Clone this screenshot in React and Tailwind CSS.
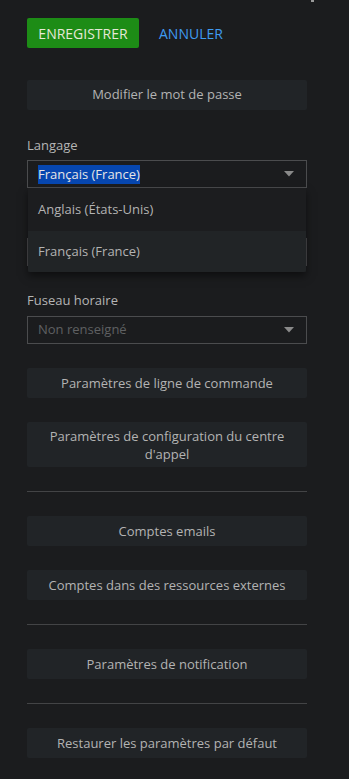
import React from "react";

const Arrow = ({ color = "#8a8a8a" }) => (
  <svg width="10" height="6" viewBox="0 0 10 6" className="absolute right-[12px] top-1/2 -translate-y-1/2">
    <path d="M0 0 L10 0 L5 5.5 Z" fill={color} />
  </svg>
);

const GreyBtn = ({ children, tall }) => (
  <div
    className={`mt-[24px] flex ${tall ? "h-[45px]" : "h-[30px]"} w-full items-center justify-center rounded-[2px] bg-[#212427] px-4 text-center text-[13px] leading-[18px] text-[#b3b3b3]`}
  >
    {children}
  </div>
);

const Divider = () => <div className="mt-[24px] h-px w-full bg-[#434446]" />;

export default function App() {
  return (
    <div
      className="relative min-h-[779px] w-[349px] overflow-hidden bg-[#1b1c1e] pt-[18px]"
      style={{ fontFamily: '"Open Sans", "Noto Sans", sans-serif' }}
    >
      <div className="absolute left-[311px] top-0 h-[2px] w-[3px] bg-[#9a9a9a]" />
      <div className="ml-[27px] flex w-[280px] flex-col">
        <div className="flex items-center">
          <div className="flex h-[30px] w-[112px] items-center justify-center rounded-[2px] bg-[#1d8c16] text-[14px] text-[#e6e8d8]">
            ENREGISTRER
          </div>
          <div className="ml-[20px] text-[14px] text-[#3f9bf0]">ANNULER</div>
        </div>

        <div className="mt-[32px] flex h-[30px] w-full items-center justify-center rounded-[2px] bg-[#212427] text-[13px] text-[#b3b3b3]">
          Modifier le mot de passe
        </div>

        <div className="mt-[26px] text-[13px] leading-[18px] text-[#b5b5b5]">Langage</div>
        <div className="relative mt-[6px] h-[28px] w-full border border-[#4b4c4e]">
          <div className="flex h-full items-center pl-[10px]">
            <span className="bg-[#0747b0] px-0 text-[13px] leading-[19px] text-[#e6e6e6]">Français (France)</span>
          </div>
          <Arrow />
          <div className="absolute left-0 right-0 top-[27px] z-10 flex flex-col shadow-[0_4px_8px_rgba(0,0,0,0.5)]">
            <div className="flex h-[43px] items-center bg-[#1c1d1f] pl-[10px] text-[13px] text-[#b3b3b3]">
              Anglais (États-Unis)
            </div>
            <div className="flex h-[41px] items-center rounded-b-[2px] bg-[#212426] pl-[10px] text-[13px] text-[#b3b3b3]">
              Français (France)
            </div>
          </div>
        </div>

        <div className="mt-[50px] h-[28px] w-full border border-[#4b4c4e]" />

        <div className="mt-[25px] text-[13px] leading-[18px] text-[#b5b5b5]">Fuseau horaire</div>
        <div className="relative mt-[7px] flex h-[28px] w-full items-center border border-[#4b4c4e] pl-[10px] text-[13px] text-[#5f6062]">
          Non renseigné
          <Arrow color="#8a8a8a" />
        </div>

        <GreyBtn>Paramètres de ligne de commande</GreyBtn>
        <GreyBtn tall>
          Paramètres de configuration du centre
          <br />
          d'appel
        </GreyBtn>
        <Divider />
        <GreyBtn>Comptes emails</GreyBtn>
        <GreyBtn>Comptes dans des ressources externes</GreyBtn>
        <Divider />
        <GreyBtn>Paramètres de notification</GreyBtn>
        <Divider />
        <GreyBtn>Restaurer les paramètres par défaut</GreyBtn>
      </div>
    </div>
  );
}
